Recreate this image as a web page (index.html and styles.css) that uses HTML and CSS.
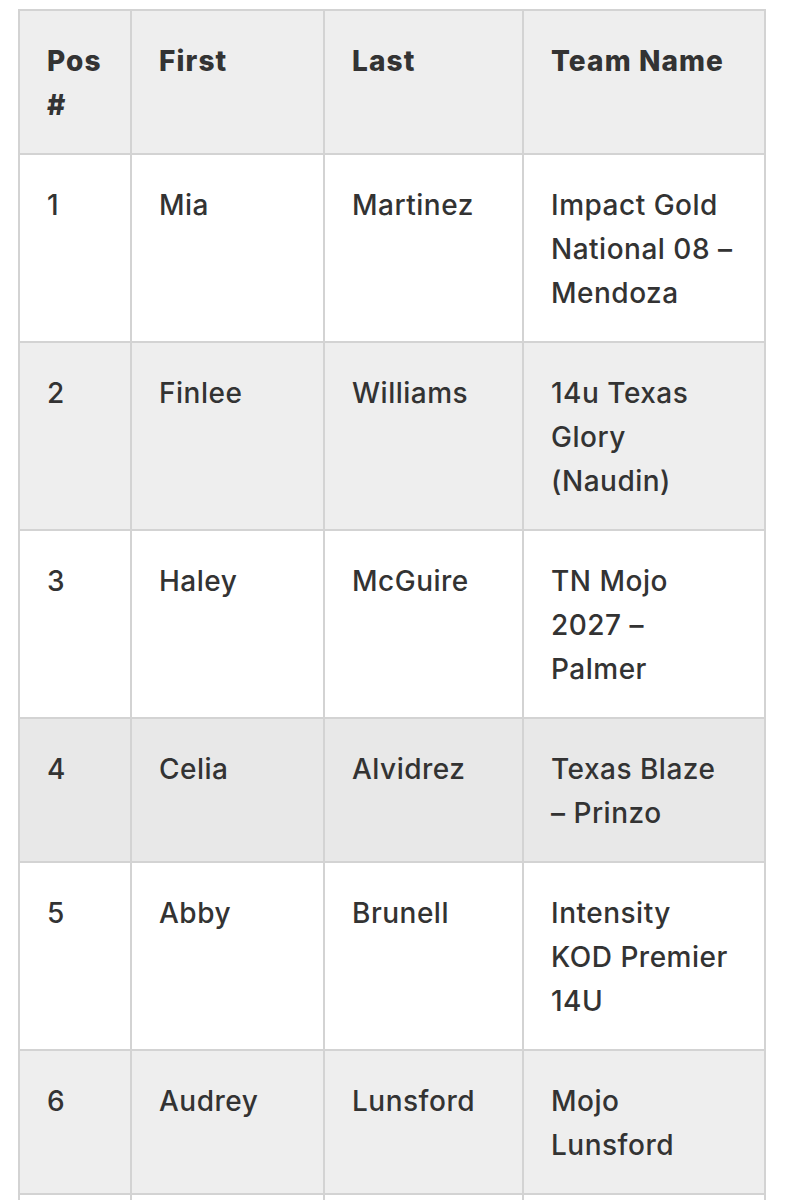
FILE: index.html
```html
<!DOCTYPE html>
<html lang="en">
<head>
<meta charset="utf-8">
<title>Rankings</title>
<link rel="stylesheet" href="styles.css">
</head>
<body>
<div class="page">
<table class="rank">
  <colgroup>
    <col class="c-pos"><col class="c-first"><col class="c-last"><col class="c-team">
  </colgroup>
  <thead>
    <tr><th>Pos<br>#</th><th>First</th><th>Last</th><th>Team Name</th></tr>
  </thead>
  <tbody>
    <tr><td>1</td><td>Mia</td><td>Martinez</td><td>Impact Gold<br>National 08 –<br>Mendoza</td></tr>
    <tr class="alt"><td>2</td><td>Finlee</td><td>Williams</td><td>14u Texas<br>Glory<br>(Naudin)</td></tr>
    <tr><td>3</td><td>Haley</td><td>McGuire</td><td>TN Mojo<br>2027 –<br>Palmer</td></tr>
    <tr class="alt dark"><td>4</td><td>Celia</td><td>Alvidrez</td><td>Texas Blaze<br>– Prinzo</td></tr>
    <tr><td>5</td><td>Abby</td><td>Brunell</td><td>Intensity<br>KOD Premier<br>14U</td></tr>
    <tr class="alt"><td>6</td><td>Audrey</td><td>Lunsford</td><td>Mojo<br>Lunsford</td></tr>
    <tr><td>&nbsp;</td><td>&nbsp;</td><td>&nbsp;</td><td>&nbsp;<br>&nbsp;</td></tr>
  </tbody>
</table>
</div>
</body>
</html>
```
FILE: styles.css
```css
html, body {
  margin: 0;
  padding: 0;
  background: #ffffff;
}
.page {
  padding: 9px 20px 0 18px;
}
.rank {
  border-collapse: collapse;
  width: 746px;
  table-layout: fixed;
  font-family: Inter, "Noto Sans", sans-serif;
  font-size: 28px;
  line-height: 44px;
  color: #333333;
}
.c-pos { width: 112px; }
.c-first { width: 193px; }
.c-last { width: 199px; }
.c-team { width: 242px; }
.rank th,
.rank td {
  border: 2px solid #d3d3d3;
  padding: 28px 20px 26px 27px;
  text-align: left;
  vertical-align: top;
  white-space: nowrap;
}
.rank th {
  font-weight: 800;
  letter-spacing: 1.1px;
  background: #eeeeee;
}
.rank td {
  font-weight: 500;
  letter-spacing: 0.5px;
  background: #ffffff;
}
.rank tr.alt td {
  background: #eeeeee;
}
.rank tr.dark td {
  background: #e8e8e8;
}
```
